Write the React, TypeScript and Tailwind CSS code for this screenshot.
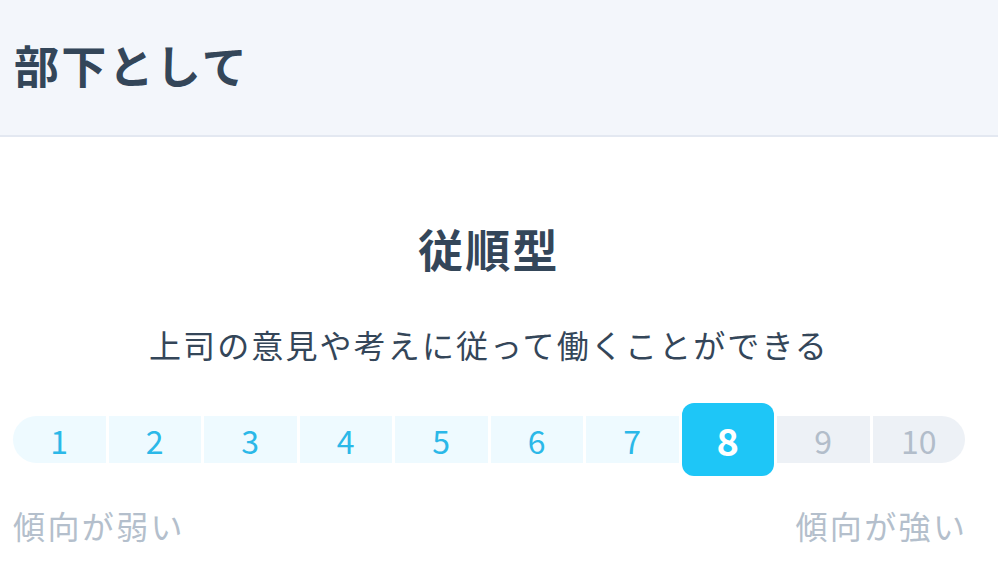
import React from "react";

const font = { fontFamily: '"Noto Sans CJK JP", "Noto Sans", sans-serif' };

export default function App() {
  const selected = 8;
  const nums = [1, 2, 3, 4, 5, 6, 7, 8, 9, 10];
  return (
    <div className="w-[998px] h-[570px] bg-white overflow-hidden" style={font}>
      <div className="h-[137px] bg-[#f3f6fb] border-b-2 border-[#e3e8f1] flex items-center px-[14px] pb-[7px]">
        <h1 className="text-[45px] leading-none font-bold tracking-[0.05em] text-[#344659]">部下として</h1>
      </div>
      <div className="pl-[13px] pr-[33px]">
        <h2 className="mt-[79px] text-center text-[45px] leading-[66px] font-bold tracking-[0.05em] text-[#344659]">従順型</h2>
        <p className="mt-[38px] text-center text-[32px] leading-[48px] tracking-[0.066em] text-[#344659]">
          上司の意見や考えに従って働くことができる
        </p>
        <div className="mt-[35px] h-[73px] flex items-center gap-[3px]">
          {nums.map((n, i) => {
            if (n === selected) {
              return (
                <div
                  key={n}
                  className="flex-1 h-[73px] rounded-[12px] bg-[#1ec6f7] flex items-center justify-center text-white text-[38px] font-bold leading-none"
                >
                  {n}
                </div>
              );
            }
            const active = n < selected;
            const first = i === 0;
            const last = i === nums.length - 1;
            return (
              <div
                key={n}
                className={
                  "flex-1 h-[47px] flex items-center justify-center text-[32px] leading-none " +
                  (active ? "bg-[#eefaff] text-[#2bb8e8] " : "bg-[#edf1f6] text-[#b2bdca] ") +
                  (first ? "rounded-l-full " : "") +
                  (last ? "rounded-r-full " : "")
                }
              >
                {n}
              </div>
            );
          })}
        </div>
        <div className="mt-[27px] flex justify-between text-[32px] leading-[45px] tracking-[0.075em] text-[#b4bfcc]">
          <span>傾向が弱い</span>
          <span className="-mr-[2.4px]">傾向が強い</span>
        </div>
      </div>
    </div>
  );
}
